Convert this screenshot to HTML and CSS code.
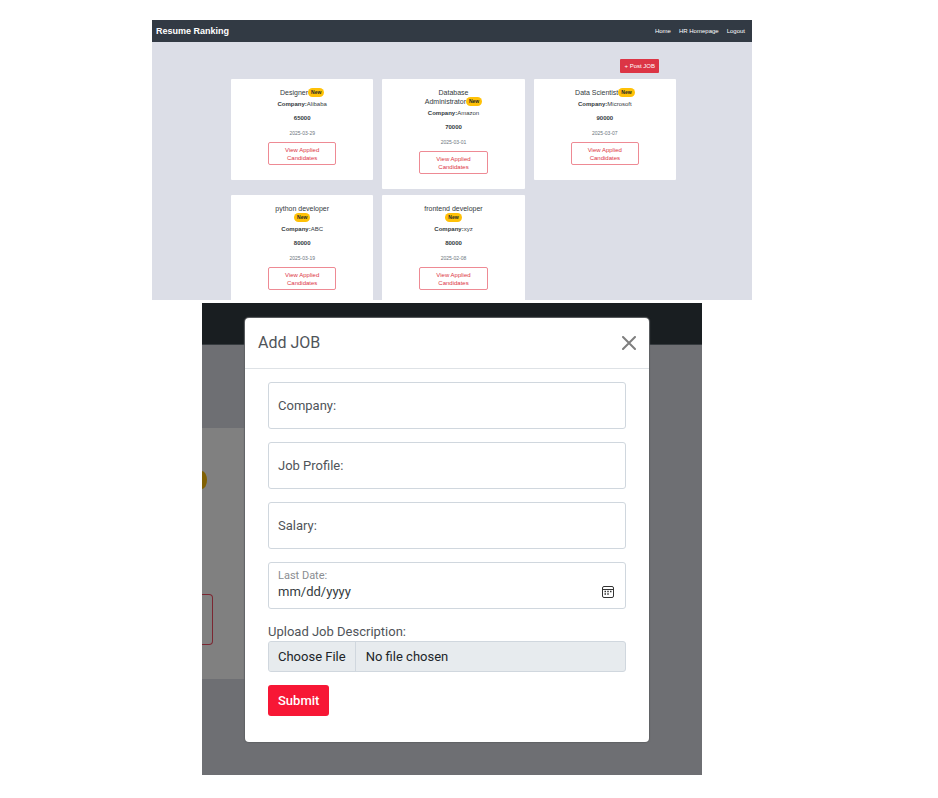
FILE: index.html
```html
<!DOCTYPE html>
<html lang="en">
<head>
<meta charset="utf-8">
<meta name="viewport" content="width=device-width, initial-scale=1">
<title>Resume Ranking</title>
<link rel="stylesheet" href="styles.css">
</head>
<body>
<main class="page">
  <section class="dashboard">
    <header class="navbar">
      <a class="brand" href="#">Resume Ranking</a>
      <nav class="nav-links">
        <a href="#">Home</a>
        <a href="#">HR Homepage</a>
        <a href="#">Logout</a>
      </nav>
    </header>
    <div class="toolbar"><button class="post-button" type="button">+ Post JOB</button></div>
    <div class="cards">
      <article class="card">
        <h2 class="job-title">Designer<span class="badge">New</span></h2>
        <p class="company"><b>Company:</b>Alibaba</p>
        <p class="salary">65000</p>
        <p class="date">2025-03-29</p>
        <button class="view-button" type="button">View Applied Candidates</button>
      </article>
      <article class="card">
        <h2 class="job-title">Database Administrator<span class="badge">New</span></h2>
        <p class="company"><b>Company:</b>Amazon</p>
        <p class="salary">70000</p>
        <p class="date">2025-03-01</p>
        <button class="view-button" type="button">View Applied Candidates</button>
      </article>
      <article class="card">
        <h2 class="job-title">Data Scientist<span class="badge">New</span></h2>
        <p class="company"><b>Company:</b>Microsoft</p>
        <p class="salary">90000</p>
        <p class="date">2025-03-07</p>
        <button class="view-button" type="button">View Applied Candidates</button>
      </article>
      <article class="card">
        <h2 class="job-title">python developer<span class="badge">New</span></h2>
        <p class="company"><b>Company:</b>ABC</p>
        <p class="salary">80000</p>
        <p class="date">2025-03-19</p>
        <button class="view-button" type="button">View Applied Candidates</button>
      </article>
      <article class="card">
        <h2 class="job-title">frontend developer<span class="badge">New</span></h2>
        <p class="company"><b>Company:</b>xyz</p>
        <p class="salary">80000</p>
        <p class="date">2025-02-08</p>
        <button class="view-button" type="button">View Applied Candidates</button>
      </article>
    </div>
  </section>

  <section class="scene">
    <div class="backdrop" aria-hidden="true">
      <div class="dim-nav"></div>
      <div class="dim-card">
        <div class="dim-badge"></div>
        <div class="dim-button"></div>
      </div>
    </div>
    <div class="modal" role="dialog" aria-labelledby="modal-title">
      <header class="modal-header">
        <h2 class="modal-title" id="modal-title">Add JOB</h2>
        <button class="close" type="button" aria-label="Close">
          <svg viewBox="0 0 14 14" width="14" height="14"><path d="M1 1L13 13M13 1L1 13" fill="none" stroke="currentColor" stroke-width="2" stroke-linecap="round"/></svg>
        </button>
      </header>
      <form class="modal-body">
        <div class="field">
          <label for="company">Company:</label>
          <input id="company" type="text">
        </div>
        <div class="field">
          <label for="profile">Job Profile:</label>
          <input id="profile" type="text">
        </div>
        <div class="field">
          <label for="salary">Salary:</label>
          <input id="salary" type="text">
        </div>
        <div class="field field-date">
          <label for="last-date">Last Date:</label>
          <input id="last-date" type="date">
          <svg class="calendar" viewBox="0 0 12 12" width="12" height="12" aria-hidden="true">
            <rect x="0.5" y="0.5" width="11" height="11" rx="1.5" fill="none" stroke="#333" stroke-width="1"/>
            <path d="M1 3.5H11" stroke="#333" stroke-width="1"/>
            <path d="M2.5 5.5H4M5.25 5.5H6.75M8 5.5H9.5M2.5 8H4M5.25 8H6.75" stroke="#333" stroke-width="1.5"/>
          </svg>
        </div>
        <div class="upload">
          <label for="description">Upload Job Description:</label>
          <input id="description" type="file">
        </div>
        <button class="submit" type="submit">Submit</button>
      </form>
    </div>
  </section>
</main>
</body>
</html>
```
FILE: styles.css
```css
* { box-sizing: border-box; }

body {
  margin: 0;
  background: #fff;
}

h2, p { margin: 0; font-weight: 400; }
button, input { font: inherit; }
a { color: inherit; text-decoration: none; }

.page {
  display: flex;
  flex-direction: column;
  align-items: center;
  gap: 3px;
  padding: 20px 34px 20px 0;
}

/* Job listing */
.dashboard {
  width: 100%;
  max-width: 600px;
  max-height: 280px;
  overflow: hidden;
  background: #dcdee7;
  color: #343a40;
  font: 6px/8px "Liberation Sans", Arial, sans-serif;
}

.navbar {
  display: flex;
  align-items: center;
  justify-content: space-between;
  height: 22px;
  padding: 0 7px 0 4px;
  background: #323a44;
  color: #fff;
}

.brand { font-size: 9px; line-height: 12px; font-weight: 700; }
.nav-links { display: flex; gap: 8px; }

.toolbar {
  display: flex;
  justify-content: flex-end;
  padding: 17px 93px 6px 0;
}

.post-button {
  height: 14px;
  padding: 0 4px;
  border: 0;
  border-radius: 1px;
  background: #dc3545;
  color: #fff;
}

.cards {
  display: grid;
  grid-template-columns: repeat(3, minmax(0, 1fr));
  align-items: start;
  gap: 6px 9px;
  padding: 0 76px 16px 79px;
}

.card {
  display: flex;
  flex-direction: column;
  align-items: center;
  padding: 9px 37px 15px;
  border-radius: 1px;
  background: #fff;
  text-align: center;
}

.job-title { font-size: 7px; line-height: 9px; }

.badge {
  display: inline-block;
  padding: 0 3px;
  border-radius: 5px;
  background: #ffc107;
  color: #212529;
  font-size: 5px;
  font-weight: 700;
  vertical-align: top;
}

.company { margin-top: 3px; white-space: nowrap; }
.salary { margin-top: 6px; font-weight: 700; }
.date { margin-top: 7px; font-size: 5px; color: #6c757d; }

.view-button {
  width: 100%;
  height: 23px;
  margin-top: 5px;
  padding: 0 12px;
  border: 1px solid #ee8a94;
  border-radius: 2px;
  background: #fff;
  color: #dc3545;
}

/* Dialog over the dimmed page */
.scene {
  display: grid;
  width: 100%;
  max-width: 500px;
  background: #6e6f73;
  color: #4f5459;
  font: 13px/19px Roboto, sans-serif;
}

.backdrop, .modal { grid-area: 1 / 1; }

.dim-nav {
  height: 42px;
  border-bottom: 1px solid #363b3f;
  background: #191e21;
}

.dim-card {
  width: 50%;
  height: 251px;
  margin-top: 83px;
  padding-top: 43px;
  background: #808080;
}

.dim-badge {
  width: 5px;
  height: 18px;
  border-radius: 0 5px 5px 0 / 0 9px 9px 0;
  background: #806003;
}

.dim-button {
  width: 11px;
  height: 51px;
  margin-top: 105px;
  border: 1px solid #7c2732;
  border-left: 0;
  border-radius: 0 4px 4px 0;
}

.modal {
  margin: 15px 53px 33px 43px;
  border-radius: 4px;
  background: #fff;
  box-shadow: 0 0 1px 1px #606265;
}

.modal-header {
  display: flex;
  align-items: center;
  justify-content: space-between;
  height: 51px;
  padding: 0 13px;
  border-bottom: 1px solid #dee2e6;
}

.modal-title { font-size: 16px; line-height: 24px; }

.close {
  display: flex;
  padding: 0;
  border: 0;
  background: none;
  color: #7f7f7f;
}

.modal-body {
  display: flex;
  flex-direction: column;
  align-items: flex-start;
  gap: 13px;
  padding: 13px 23px 26px;
}

.field {
  display: grid;
  width: 100%;
  height: 47px;
}

.field label {
  grid-area: 1 / 1;
  z-index: 1;
  align-self: center;
  padding-left: 10px;
  pointer-events: none;
}

.field input {
  grid-area: 1 / 1;
  width: 100%;
  padding: 0 10px;
  border: 1px solid #d0d7de;
  border-radius: 3px;
  background: #fff;
  color: #343a40;
}

.field-date label {
  align-self: start;
  padding-top: 5px;
  color: #8a8d91;
  font-size: 11px;
  line-height: 18px;
}

.field-date input { padding: 12px 10px 0 9px; }

.field-date input::-webkit-datetime-edit-month-field,
.field-date input::-webkit-datetime-edit-day-field,
.field-date input::-webkit-datetime-edit-year-field {
  padding: 0;
}

.field-date input::-webkit-datetime-edit-fields-wrapper { padding: 0; }
.field-date input::-webkit-calendar-picker-indicator { opacity: 0; }

.calendar {
  grid-area: 1 / 1;
  z-index: 1;
  align-self: end;
  justify-self: end;
  margin: 0 12px 11px 0;
  pointer-events: none;
}

.upload {
  display: flex;
  flex-direction: column;
  width: 100%;
}

.upload input {
  width: 100%;
  height: 31px;
  border: 1px solid #d0d7de;
  border-radius: 3px;
  background: #e7ebee;
  color: #212529;
  line-height: 29px;
}

.upload input::file-selector-button {
  height: 29px;
  margin: 0 10px 0 0;
  padding: 0 9px;
  border: 0;
  border-right: 1px solid #d0d7de;
  background: #e7ebee;
  color: #212529;
  font: inherit;
}

.submit {
  height: 31px;
  padding: 0 10px;
  border: 0;
  border-radius: 3px;
  background: #f71735;
  color: #fff;
  font-weight: 500;
}
```
